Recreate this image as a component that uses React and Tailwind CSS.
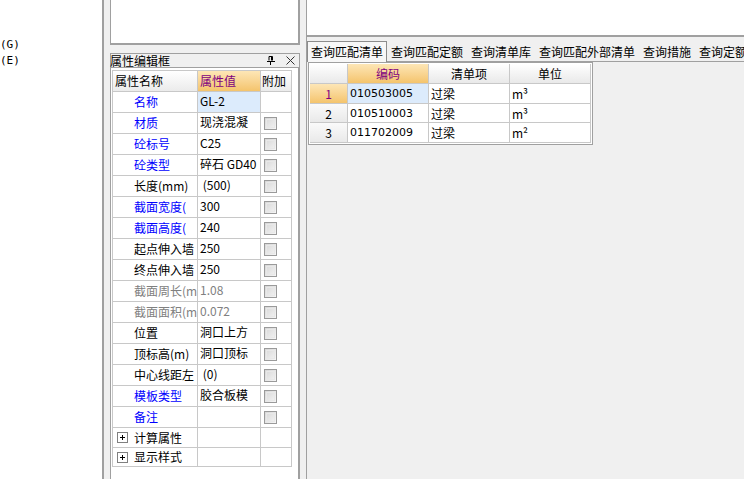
import React from 'react';

const props = [
  { name: '名称', value: 'GL-2', tone: 'blue', check: false, selected: true },
  { name: '材质', value: '现浇混凝', tone: 'blue' },
  { name: '砼标号', value: 'C25', tone: 'blue' },
  { name: '砼类型', value: '碎石 GD40', tone: 'blue' },
  { name: '长度(mm)', value: ' (500)' },
  { name: '截面宽度(', value: '300', tone: 'blue' },
  { name: '截面高度(', value: '240', tone: 'blue' },
  { name: '起点伸入墙', value: '250' },
  { name: '终点伸入墙', value: '250' },
  { name: '截面周长(m', value: '1.08', tone: 'gray' },
  { name: '截面面积(m', value: '0.072', tone: 'gray' },
  { name: '位置', value: '洞口上方' },
  { name: '顶标高(m)', value: '洞口顶标' },
  { name: '中心线距左', value: ' (0)' },
  { name: '模板类型', value: '胶合板模', tone: 'blue' },
  { name: '备注', value: '', tone: 'blue' },
];

const nameTone = {
  blue: 'text-[#0000ff]',
  gray: 'text-[#808080]',
  black: 'text-black',
};

const listRows = [
  { no: '1', code: '010503005', item: '过梁', unit: 'm³', active: true },
  { no: '2', code: '010510003', item: '过梁', unit: 'm³' },
  { no: '3', code: '011702009', item: '过梁', unit: 'm²' },
];

const tabs = ['查询匹配清单', '查询匹配定额', '查询清单库', '查询匹配外部清单', '查询措施', '查询定额库'];

const CheckBox = () => (
  <div className="w-[13px] h-[13px] border border-[#9a9a9a] bg-linear-to-br from-[#d6d6d6] to-[#f6f6f6] flex items-center justify-center">
    <div className="w-[9px] h-[9px] border border-[#e8e8e8] bg-linear-to-br from-[#dcdcdc] to-[#efefef]" />
  </div>
);

const PlusBox = () => (
  <svg width="11" height="11" viewBox="0 0 11 11" className="shrink-0">
    <rect x="0.5" y="0.5" width="10" height="10" fill="#fff" stroke="#808080" />
    <path d="M3 5.5h5M5.5 3v5" stroke="#000" strokeWidth="1" />
  </svg>
);

const PinIcon = () => (
  <svg width="8" height="9" viewBox="0 0 8 9">
    <path d="M2 0.5h3.5v4M2 0.5v4M4.5 0.5v4" stroke="#000" fill="none" strokeWidth="1" />
    <path d="M0 5.5h8M3.5 5.5v3.5" stroke="#000" strokeWidth="1" />
  </svg>
);

const CloseIcon = () => (
  <svg width="9" height="9" viewBox="0 0 9 9">
    <path d="M0.5 0.5l8 8M8.5 0.5l-8 8" stroke="#333" strokeWidth="1" />
  </svg>
);

function PropertyGrid() {
  return (
    <div className="w-[180px] border-l border-t border-[#c8c8c8]">
      {/* header */}
      <div className="flex h-[21px] border-b border-[#c8c8c8]">
        <div className="w-[85px] border-r border-[#c8c8c8] bg-linear-to-b from-white to-[#ebebeb] pl-[2px] leading-[20px]">属性名称</div>
        <div className="w-[63px] border-r border-[#c8c8c8] bg-linear-to-b from-[#fde6b6] to-[#f4c46c] pl-[2px] leading-[20px] text-[#800080]">属性值</div>
        <div className="w-[31px] border-r border-[#c8c8c8] bg-linear-to-b from-white to-[#ebebeb] pl-[1px] leading-[20px]">附加</div>
      </div>
      {props.map((p) => (
        <div key={p.name} className="flex h-[21px] border-b border-[#c8c8c8]">
          <div className={`w-[85px] border-r border-[#c8c8c8] pl-[21px] overflow-hidden whitespace-nowrap leading-[20px] ${nameTone[p.tone || 'black']}`}>
            {p.name}
          </div>
          <div
            className={`w-[63px] border-r border-[#c8c8c8] pl-[2px] overflow-hidden whitespace-pre leading-[18px] ${
              p.selected ? 'bg-[#dcebfc]' : ''
            } ${p.tone === 'gray' ? 'text-[#808080]' : 'text-black'}`}
          >
            {p.value}
          </div>
          <div className="w-[31px] border-r border-[#c8c8c8] flex items-center pl-[3px]">
            {p.check !== false && <CheckBox />}
          </div>
        </div>
      ))}
      {['计算属性', '显示样式'].map((t, i) => (
        <div key={t} className={`flex border-b border-[#c8c8c8] ${i === 0 ? 'h-[20px]' : 'h-[19px]'}`}>
          <div className="w-[85px] border-r border-[#c8c8c8] pl-[4px] flex items-center gap-[6px] whitespace-nowrap leading-[18px]">
            <PlusBox />
            <span>{t}</span>
          </div>
          <div className="w-[63px] border-r border-[#c8c8c8]" />
          <div className="w-[31px] border-r border-[#c8c8c8]" />
        </div>
      ))}
    </div>
  );
}

function ListGrid() {
  return (
    <div className="w-[285px] border border-[#a0a0a0] bg-white p-[1px]">
      <div className="flex h-[20px] border-b border-[#c8c8c8]">
        <div className="w-[38px] border-r border-[#c8c8c8] bg-linear-to-b from-white to-[#e9e9e9]" />
        <div className="w-[81px] border-r border-[#c8c8c8] bg-linear-to-b from-[#fde6b6] to-[#f4c46c] text-center leading-[19px] text-[#800080]">编码</div>
        <div className="w-[81px] border-r border-[#c8c8c8] bg-linear-to-b from-white to-[#e9e9e9] text-center leading-[19px]">清单项</div>
        <div className="w-[81px] border-r border-[#c8c8c8] bg-linear-to-b from-white to-[#e9e9e9] text-center leading-[19px]">单位</div>
      </div>
      {listRows.map((r, i) => (
        <div key={r.no} className={`flex border-b border-[#c8c8c8] ${i === 1 ? 'h-[19px]' : 'h-[20px]'}`}>
          <div
            className={`w-[38px] border-r border-[#c8c8c8] text-center leading-[19px] ${
              r.active ? 'bg-linear-to-b from-[#fde6b6] to-[#f4c46c] text-[#800080]' : 'bg-linear-to-b from-[#fafafa] to-[#e9e9e9]'
            }`}
          >
            {r.no}
          </div>
          <div
            className={`w-[81px] border-r border-[#c8c8c8] pl-[2px] leading-[19px] text-[11px] font-['DejaVu_Sans',sans-serif] ${
              r.active ? 'bg-[#dcebfc]' : ''
            }`}
          >
            {r.code}
          </div>
          <div className="w-[81px] border-r border-[#c8c8c8] pl-[2px] leading-[19px]">{r.item}</div>
          <div className="w-[81px] border-r border-[#c8c8c8] pl-[2px] leading-[19px]">{r.unit}</div>
        </div>
      ))}
    </div>
  );
}

export default function App() {
  return (
    <div className="w-[744px] h-[479px] overflow-hidden flex bg-[#f0f0f0] text-[12px] text-black font-['Noto_Sans_CJK_SC',sans-serif]">
      {/* left tree (cut off) */}
      <div className="w-[104px] shrink-0 bg-white border-r-2 border-[#a0a0a0] pt-[37px] font-['DejaVu_Sans_Mono',monospace] text-[11px] leading-[16px] whitespace-nowrap overflow-hidden">
        <div>(G)</div>
        <div>(E)</div>
      </div>

      {/* middle column */}
      <div className="w-[202px] shrink-0 px-[6px] flex flex-col">
        <div className="h-[45px] bg-white border-l border-r-2 border-b-2 border-[#a0a0a0]" />
        <div className="mt-[8px] h-[14px] border-t border-x border-[#a0a0a0] flex items-center justify-between pr-[4px]">
          <span className="leading-[13px] -ml-[1px]">属性编辑框</span>
          <div className="flex items-center gap-[11px]">
            <PinIcon />
            <CloseIcon />
          </div>
        </div>
        <div className="flex-1 bg-white border-t border-l border-r-2 border-[#a0a0a0] pt-[2px] pl-[1px]">
          <PropertyGrid />
        </div>
      </div>

      {/* right column */}
      <div className="flex-1 border-l border-[#a0a0a0] flex flex-col overflow-hidden">
        <div className="h-[37px] shrink-0 bg-white border-b-2 border-[#a0a0a0]" />
        <div className="mt-[4px] h-[21px] shrink-0 flex border-b border-[#a0a0a0] whitespace-nowrap">
          {tabs.map((t, i) => (
            <div
              key={t}
              className={`h-[21px] px-[3px] leading-[20px] shrink-0 ${
                i === 0 ? 'border border-b-0 border-[#8c8c8c] bg-[#f7f7f7]' : 'border border-transparent'
              }`}
            >
              {t}
            </div>
          ))}
        </div>
        <div className="ml-[1px]">
          <ListGrid />
        </div>
      </div>
    </div>
  );
}
